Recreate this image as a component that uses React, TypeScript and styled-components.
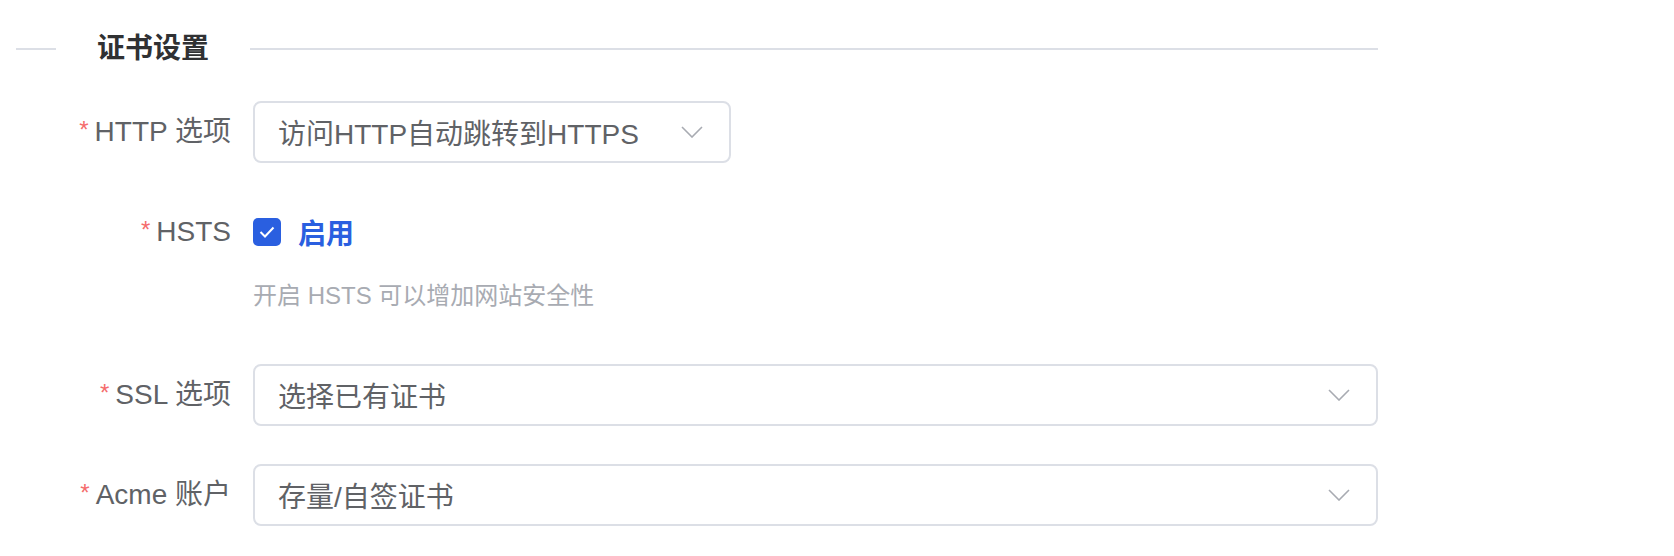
import styled, { createGlobalStyle } from 'styled-components'

const GlobalStyle = createGlobalStyle`
  body {
    margin: 0;
    background: #ffffff;
    font-family: "Liberation Sans", "Noto Sans CJK SC", sans-serif;
  }
`

function Chevron() {
  return (
    <svg width="22" height="12" viewBox="0 0 22 12" fill="none">
      <polyline points="1,1 11,11 21,1" stroke="#a8abb2" strokeWidth="1.6" />
    </svg>
  )
}

function Check() {
  return (
    <svg width="16" height="12" viewBox="0 0 16 12" fill="none">
      <polyline points="1.5,6 6,10.5 14.5,1.5" stroke="#ffffff" strokeWidth="2" />
    </svg>
  )
}

export default function App() {
  return (
    <>
      <GlobalStyle />
      <Form>
        <Divider>
          <DividerLine $short />
          <DividerTitle>证书设置</DividerTitle>
          <DividerLine />
        </Divider>

        <FormItem>
          <Label>HTTP 选项</Label>
          <Content>
            <Select $width="478px">
              <SelectText>访问HTTP自动跳转到HTTPS</SelectText>
              <Chevron />
            </Select>
          </Content>
        </FormItem>

        <FormItem>
          <Label>HSTS</Label>
          <Content>
            <CheckRow>
              <CheckBox>
                <Check />
              </CheckBox>
              <CheckLabel>启用</CheckLabel>
            </CheckRow>
            <Hint>开启 HSTS 可以增加网站安全性</Hint>
          </Content>
        </FormItem>

        <FormItem>
          <Label>SSL 选项</Label>
          <Content>
            <Select>
              <SelectText>选择已有证书</SelectText>
              <Chevron />
            </Select>
          </Content>
        </FormItem>

        <FormItem>
          <Label>Acme 账户</Label>
          <Content>
            <Select>
              <SelectText>存量/自签证书</SelectText>
              <Chevron />
            </Select>
          </Content>
        </FormItem>
      </Form>
    </>
  )
}

const Form = styled.div`
  width: 1362px;
  padding: 20px 0 0 16px;
`
const Divider = styled.div`
  display: flex;
  align-items: center;
  height: 58px;
  margin-bottom: 23px;
`
const DividerLine = styled.div<{ $short?: boolean }>`
  height: 2px;
  background: #dcdfe6;
  ${(p) => (p.$short ? 'width: 40px;' : 'flex: 1;')}
`
const DividerTitle = styled.div`
  padding: 0 41px;
  font-size: 28px;
  font-weight: 700;
  color: #303133;
  line-height: 58px;
`
const FormItem = styled.div`
  display: flex;
  align-items: flex-start;
  margin-bottom: 38px;
`
const Label = styled.label`
  width: 237px;
  height: 62px;
  overflow: hidden;
  box-sizing: border-box;
  padding-right: 22px;
  text-align: right;
  font-size: 28px;
  line-height: 62px;
  color: #606266;
  &::before {
    content: '*';
    color: #f56c6c;
    font-size: 24px;
    line-height: 1;
    margin-right: 6px;
    vertical-align: 3px;
  }
`
const Content = styled.div`
  flex: 1;
  display: flex;
  flex-direction: column;
`
const Select = styled.div<{ $width?: string }>`
  width: ${(p) => p.$width || '100%'};
  height: 62px;
  box-sizing: border-box;
  border: 2px solid #dcdfe6;
  border-radius: 8px;
  padding: 0 26px 0 23px;
  display: flex;
  align-items: center;
  justify-content: space-between;
  background: #fff;
`
const SelectText = styled.span`
  font-size: 28px;
  color: #606266;
`
const CheckRow = styled.div`
  height: 62px;
  display: flex;
  align-items: center;
  gap: 17px;
`
const CheckBox = styled.span`
  width: 28px;
  height: 28px;
  border-radius: 5px;
  background: #2a5fe0;
  display: flex;
  align-items: center;
  justify-content: center;
`
const CheckLabel = styled.span`
  font-size: 28px;
  font-weight: 700;
  color: #2a5fe0;
`
const Hint = styled.div`
  margin-top: 16px;
  margin-bottom: 13px;
  font-size: 24px;
  line-height: 34px;
  color: #a8abb2;
`
